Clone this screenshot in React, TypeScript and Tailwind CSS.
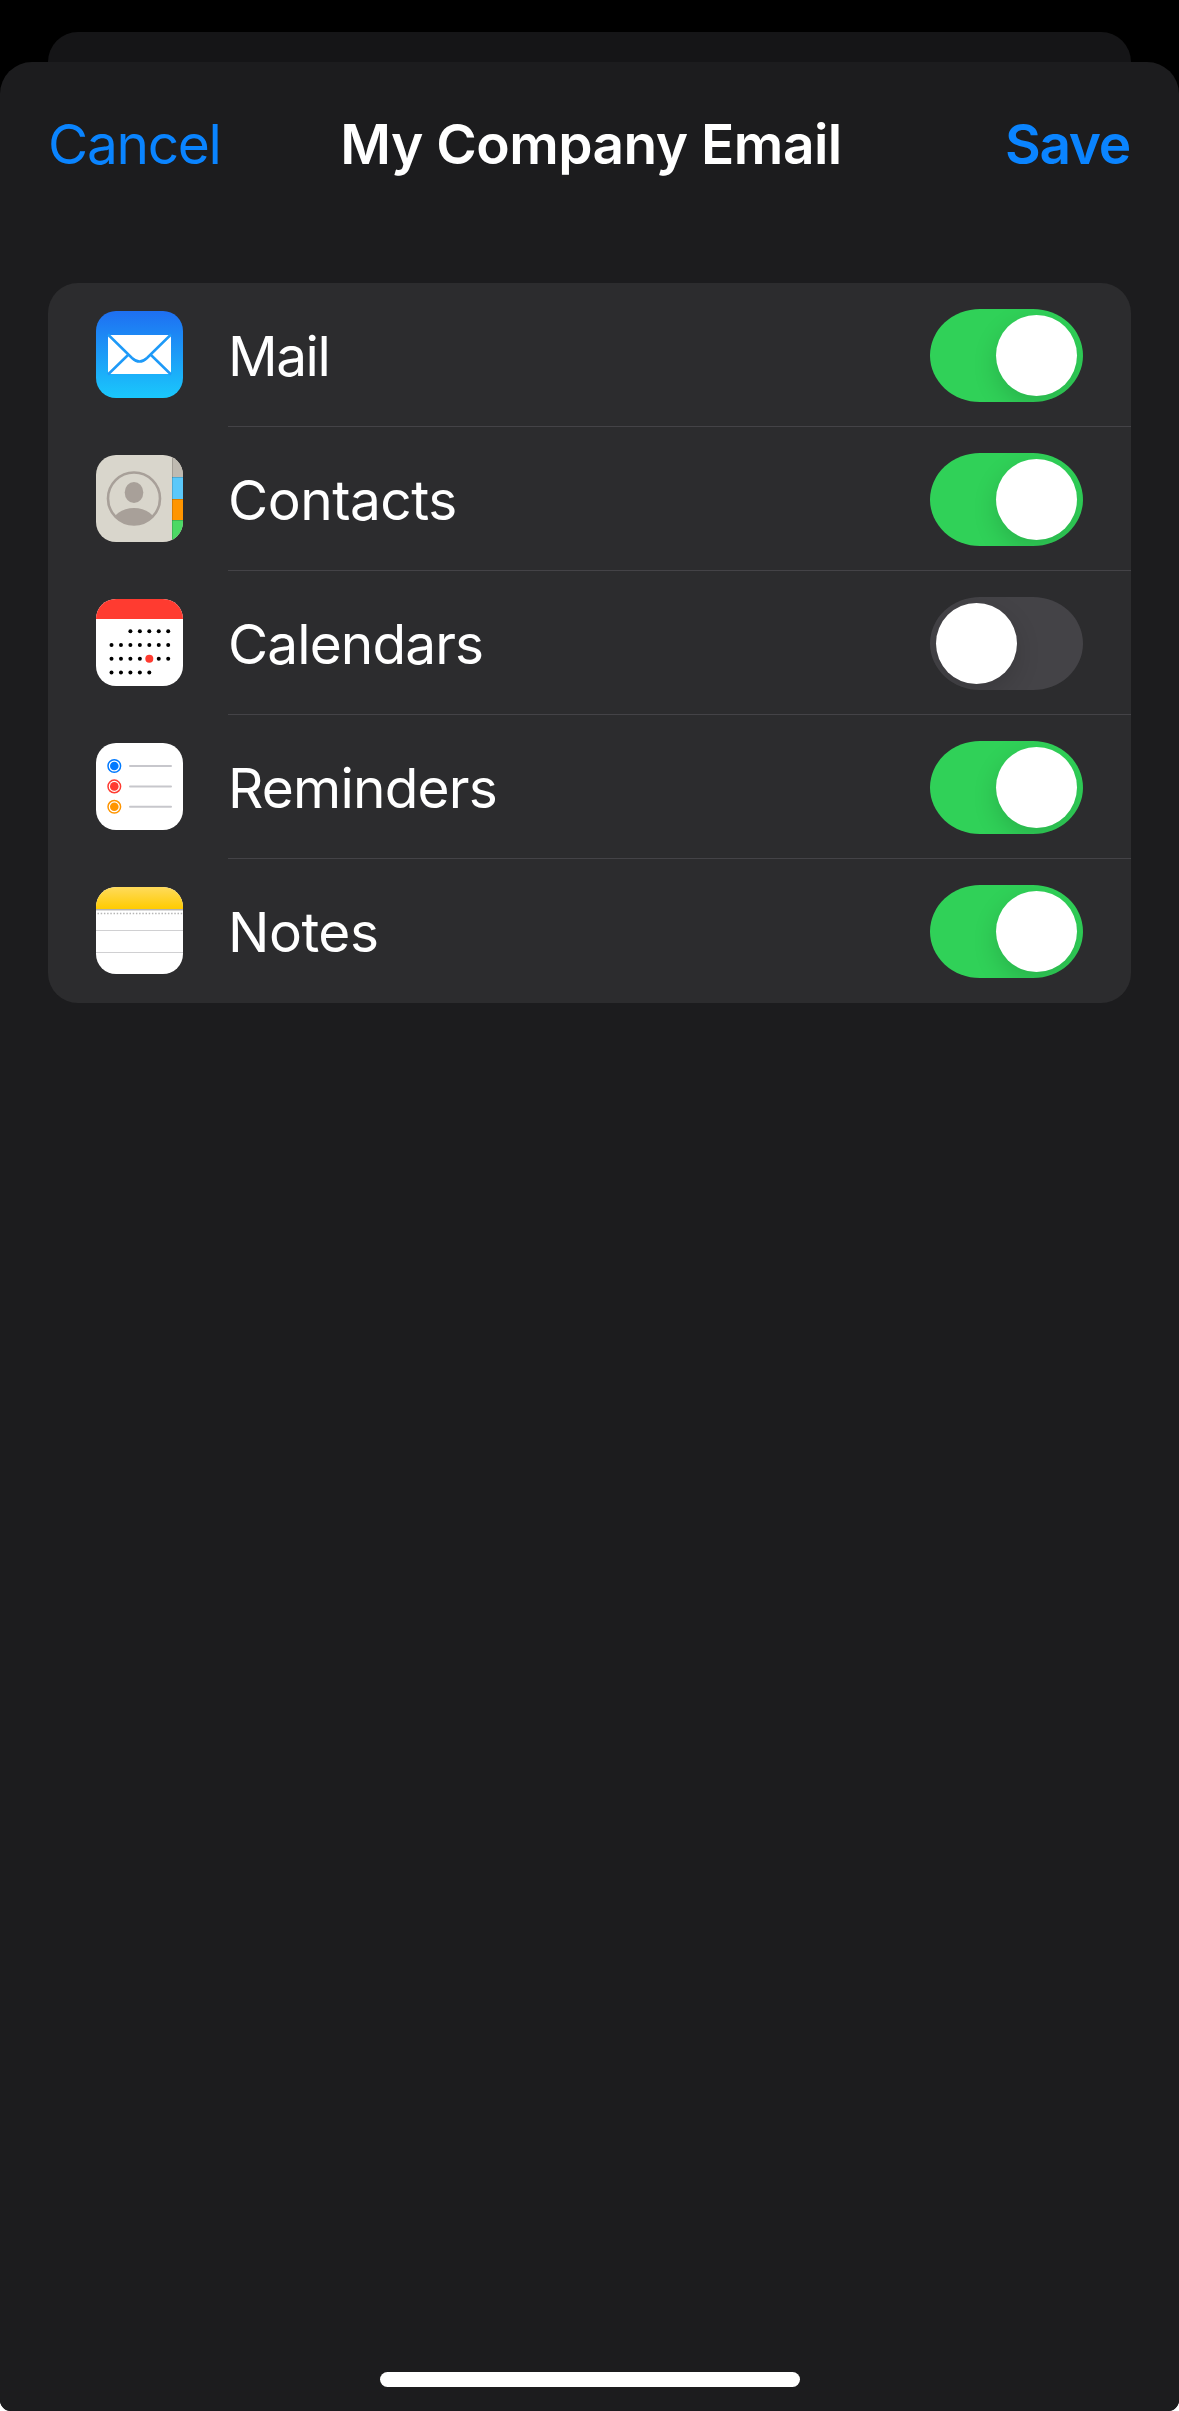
import { useState } from "react";
import type { ReactNode } from "react";

const MailIcon = () => (
  <svg viewBox="0 0 87 87" className="h-[87px] w-[87px]">
    <defs>
      <linearGradient id="mail" x1="0" y1="0" x2="0" y2="1">
        <stop offset="0" stopColor="#1e6ff2" />
        <stop offset="1" stopColor="#1ac8fc" />
      </linearGradient>
    </defs>
    <rect width="87" height="87" fill="url(#mail)" />
    <rect x="12" y="24" width="63" height="39" rx="3" fill="#fff" />
    <g fill="none" stroke="#1e9af8" strokeWidth="2.5">
      <path d="M12 23.500 L36 47 Q43.500 54 51 47 L75 23.500" />
      <path d="M12 63.500 L32 44 M75 63.500 L55 44" />
    </g>
  </svg>
);

const ContactsIcon = () => (
  <svg viewBox="0 0 87 87" className="h-[87px] w-[87px]">
    <defs>
      <clipPath id="avatar">
        <circle cx="38" cy="43.500" r="26" />
      </clipPath>
    </defs>
    <rect width="87" height="87" fill="#d9d6cc" />
    <rect x="76" width="11" height="22" fill="#bfbab1" />
    <rect x="76" y="22" width="11" height="22" fill="#5ac8fa" />
    <rect x="76" y="44" width="11" height="21" fill="#ff9500" />
    <rect x="76" y="65" width="11" height="22" fill="#4cd964" />
    <path d="M76.500 0V87" stroke="#000" strokeOpacity="0.15" />
    <path d="M76 22.500H87M76 44.500H87M76 65.500H87" stroke="#000" strokeOpacity="0.15" />
    <g fill="#a8a099">
      <ellipse cx="38" cy="37.500" rx="9.300" ry="10.500" />
      <ellipse cx="38" cy="69" rx="22" ry="16" clipPath="url(#avatar)" />
    </g>
    <circle cx="38" cy="43.500" r="26" fill="none" stroke="#a8a099" strokeWidth="2.600" />
  </svg>
);

// first and last column of each calendar week
const weeks = [
  [2, 6],
  [0, 6],
  [0, 6],
  [0, 4],
];

const CalendarIcon = () => (
  <svg viewBox="0 0 87 87" className="h-[87px] w-[87px]">
    <rect width="87" height="87" fill="#fff" />
    <rect width="87" height="20" fill="#ff3b30" />
    {weeks.map(([from, to], row) =>
      [0, 1, 2, 3, 4, 5, 6]
        .filter((col) => col >= from && col <= to)
        .map((col) => {
          const today = row === 2 && col === 4;
          return (
            <circle
              key={`${row}-${col}`}
              cx={15.5 + col * 9.45}
              cy={32.3 + row * 13.75}
              r={today ? 4 : 2}
              fill={today ? "#ff3b30" : "#000"}
            />
          );
        })
    )}
  </svg>
);

const RemindersIcon = () => (
  <svg viewBox="0 0 87 87" className="h-[87px] w-[87px]">
    <rect width="87" height="87" fill="#fff" />
    {["#007aff", "#ff3b30", "#ff9500"].map((color, i) => (
      <g key={color}>
        <circle cx="18.300" cy={23 + i * 20.4} r="6.300" fill="none" stroke={color} strokeWidth="1.500" />
        <circle cx="18.300" cy={23 + i * 20.4} r="4.300" fill={color} />
        <path d={`M34 ${23 + i * 20.4}H75`} stroke="#c7c7cc" strokeWidth="2" strokeLinecap="round" />
      </g>
    ))}
  </svg>
);

const NotesIcon = () => (
  <svg viewBox="0 0 87 87" className="h-[87px] w-[87px]">
    <defs>
      <linearGradient id="notes" x1="0" y1="0" x2="0" y2="1">
        <stop offset="0" stopColor="#ffdb5c" />
        <stop offset="1" stopColor="#ffcb00" />
      </linearGradient>
    </defs>
    <rect width="87" height="87" fill="#fff" />
    <rect width="87" height="22" fill="url(#notes)" />
    <path d="M0 22.500H87" stroke="#b4b2ac" />
    <path d="M0 23.500H87" stroke="#dcdcdc" />
    <path d="M1.500 26.500H87" stroke="#b5b5b5" strokeWidth="1.500" strokeDasharray="1.500 1.700" />
    <path d="M0 43.500H87M0 65.500H87" stroke="#d0d0d2" />
  </svg>
);

type ToggleProps = { label: string; on: boolean; onChange: () => void };

const Toggle = ({ label, on, onChange }: ToggleProps) => (
  <button
    role="switch"
    aria-checked={on}
    aria-label={label}
    onClick={onChange}
    className={`flex h-[93px] w-[153px] shrink-0 items-center overflow-hidden rounded-[50px/46.5px] px-1.5 ${
      on ? "justify-end bg-[#30d158]" : "justify-start bg-[#444347]"
    }`}
  >
    <span className="h-[81px] w-[81px] rounded-full bg-white shadow-[0_9px_24px_rgba(0,0,0,0.15)]" />
  </button>
);

const services: { name: string; icon: ReactNode; tracking: string }[] = [
  { name: "Mail", icon: <MailIcon />, tracking: "tracking-[-1.5px]" },
  { name: "Contacts", icon: <ContactsIcon />, tracking: "tracking-[-0.5px]" },
  { name: "Calendars", icon: <CalendarIcon />, tracking: "tracking-[-0.9px]" },
  { name: "Reminders", icon: <RemindersIcon />, tracking: "tracking-[-0.8px]" },
  { name: "Notes", icon: <NotesIcon />, tracking: "tracking-[-0.5px]" },
];

const App = () => {
  const [enabled, setEnabled] = useState(["Mail", "Contacts", "Reminders", "Notes"]);

  const toggle = (name: string) => {
    setEnabled(
      enabled.includes(name) ? enabled.filter((n) => n !== name) : [...enabled, name]
    );
  };

  return (
    <div className="h-[2411px] w-[1179px] bg-white">
      <div className="flex h-full flex-col overflow-hidden rounded-b-[11px] bg-black pt-8 font-['Inter',sans-serif] text-[55px] leading-[66px] text-white">
        <div className="mx-12 h-[30px] shrink-0">
          <div className="h-20 rounded-t-[30px] bg-[#151517]" />
        </div>
        <div className="relative flex grow flex-col rounded-t-[32px] bg-[#1c1c1e]">
          <header className="flex h-[221px] items-start justify-between px-12 pt-[49px]">
            <button className="w-[240px] text-left tracking-[-1.3px] text-[#0a84ff]">Cancel</button>
            <h1 className="pl-[3px] font-semibold whitespace-nowrap tracking-[-0.5px]">My Company Email</h1>
            <button className="w-[240px] pr-px text-right font-semibold tracking-[-1.3px] text-[#0a84ff]">Save</button>
          </header>

          <ul className="mx-12 overflow-hidden rounded-[30px] bg-[#2c2c2e]">
            {services.map((service, i) => (
              <li key={service.name} className="flex h-36 pl-12">
                <div className="mt-7 h-[87px] w-[87px] shrink-0 overflow-hidden rounded-[20px]">
                  {service.icon}
                </div>
                <div
                  className={`ml-[45px] flex grow items-start justify-between pr-12 ${
                    i < services.length - 1 ? "border-b border-[#444347]" : ""
                  }`}
                >
                  <span className={`mt-10 ${service.tracking}`}>{service.name}</span>
                  <div className="mt-[26px]">
                    <Toggle
                      label={service.name}
                      on={enabled.includes(service.name)}
                      onChange={() => toggle(service.name)}
                    />
                  </div>
                </div>
              </li>
            ))}
          </ul>

          <div className="mx-auto mt-auto mb-6 h-[15px] w-[420px] rounded-full bg-white" />
        </div>
      </div>
    </div>
  );
};

export default App;
